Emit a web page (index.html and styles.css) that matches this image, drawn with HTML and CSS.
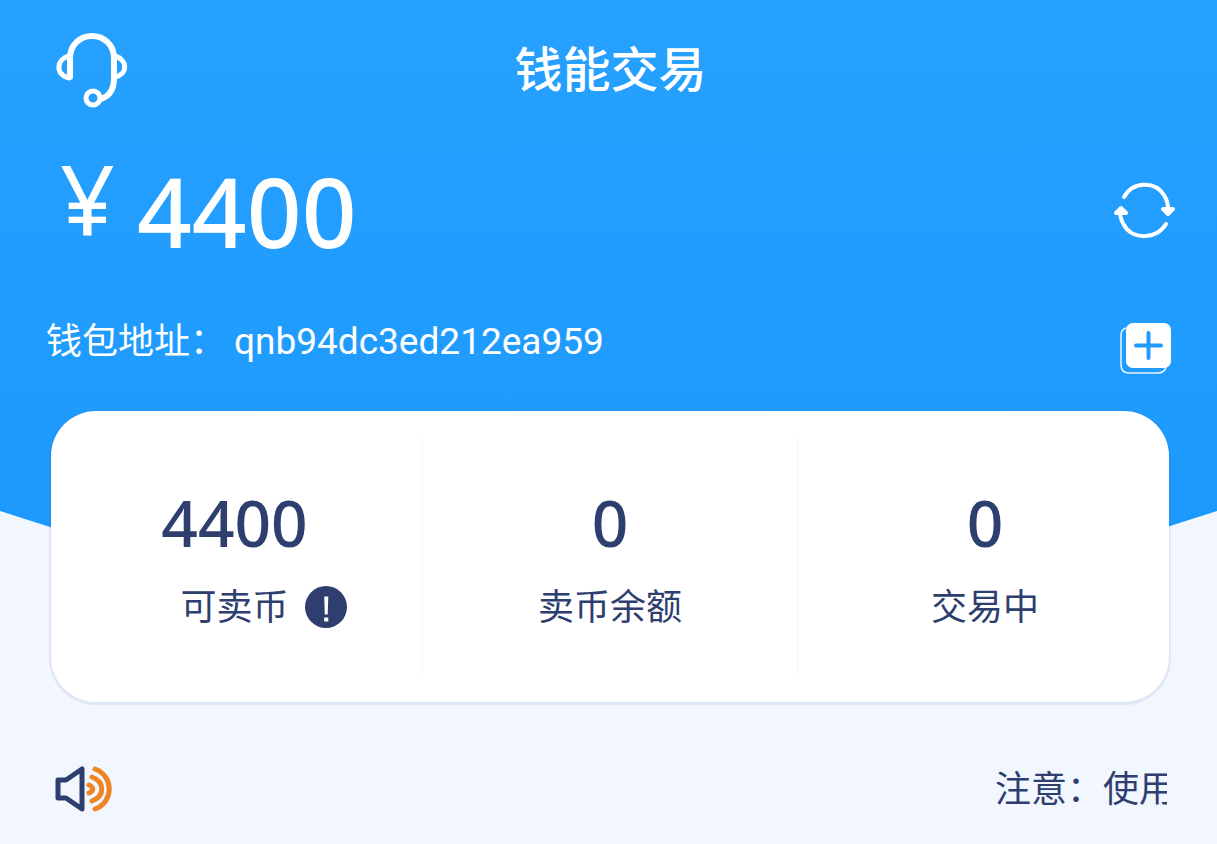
FILE: index.html
```html
<!DOCTYPE html>
<html lang="zh-CN">
<head>
	<meta charset="utf-8">
	<title>钱能交易</title>
	<meta name="viewport" content="width=device-width, initial-scale=1.0">
	<link rel="stylesheet" href="styles.css">
</head>
<body>
	<header class="hero">
		<div class="topbar">
			<button class="icon-btn" type="button" aria-label="客服">
				<svg width="72" height="78" viewBox="0 0 72 78" fill="none" stroke="#fff" stroke-width="6" stroke-linecap="round" stroke-linejoin="round">
					<path d="M14 46V27C14 14 24 5 36 5s22 9 22 22v20c0 11-4 18-13 21"/>
					<path d="M13 25C0 28-1 44 13 47M59 25c13 4 13 18 0 21" stroke-width="5"/>
					<circle cx="37" cy="67" r="7" stroke-width="5"/>
				</svg>
			</button>
			<h1>钱能交易</h1>
		</div>
		<div class="balance">
			<p class="amount"><span class="yen">¥</span>4400</p>
			<button class="icon-btn" type="button" aria-label="刷新">
				<svg width="62" height="58" viewBox="0 0 62 58" fill="none" stroke="#fff" stroke-width="4" stroke-linecap="round">
					<path d="M11 15C20-1 42-1 51 13c3 5 4 8 4 13"/>
					<path d="M53 42C43 58 19 58 11 43c-3-5-4-8-4-13"/>
					<path d="M50 27h10l-5 5zM3 31h10l-5-5z" fill="#fff" stroke-width="4" stroke-linejoin="round"/>
				</svg>
			</button>
		</div>
		<div class="wallet">
			<p><span>钱包地址：</span><span class="address">qnb94dc3ed212ea959</span></p>
			<button class="icon-btn" type="button" aria-label="复制钱包地址">
				<svg width="54" height="54" viewBox="0 0 54 54" fill="none">
					<path d="M7 7C4 8 2 11 2 14v30c0 5 3 8 8 8h29c4 0 7-2 8-6" stroke="#e6f5ff" stroke-width="1.500"/>
					<rect x="7" y="2" width="45" height="45" rx="7" fill="#fff"/>
					<path d="M29.500 12v25M17 24.500h25" stroke="#219bfd" stroke-width="4" stroke-linecap="round"/>
				</svg>
			</button>
		</div>
	</header>
	<main>
		<section class="card">
			<div class="stats">
				<div class="stat">
					<strong>4400</strong>
					<div class="label">
						<span>可卖币</span>
						<button class="hint" type="button" aria-label="说明">
							<svg width="42" height="42" viewBox="0 0 42 42">
								<circle cx="21" cy="21" r="21" fill="#2d3e6f"/>
								<path d="M19.200 10.500h4.100l-.6 18h-2.900zM19.200 31.500h4.100v4h-4.100z" fill="#fff"/>
							</svg>
						</button>
					</div>
				</div>
				<div class="stat">
					<strong>0</strong>
					<div class="label"><span>卖币余额</span></div>
				</div>
				<div class="stat">
					<strong>0</strong>
					<div class="label"><span>交易中</span></div>
				</div>
			</div>
		</section>
		<div class="notice">
			<svg width="60" height="48" viewBox="0 0 60 48" fill="none" stroke-linecap="round" stroke-linejoin="round">
				<path d="M3 15h8L27 4v40L11 33H3z" stroke="#2d3e6f" stroke-width="5"/>
				<g stroke="#ee8422" stroke-width="5">
					<path d="M40 4c19 7 19 33 0 40"/>
					<path d="M37 12c13 5 13 19 0 24"/>
					<path d="M34 20c5 2 5 6 0 8"/>
				</g>
			</svg>
			<p>注意：使用</p>
		</div>
	</main>
</body>
</html>
```
FILE: styles.css
```css
* { box-sizing: border-box; }
body {
	margin: 0;
	font-family: "Noto Sans", "Noto Sans CJK SC", sans-serif;
	font-size: 36px;
	line-height: 48px;
	color: #2d3e6f;
	background-color: #f2f6fe;
}
h1, p { margin: 0; }
button {
	padding: 0;
	border: 0;
	background: none;
	cursor: pointer;
}
svg { display: block; }
.hero {
	padding: 31px 42px 168px 46px;
	color: white;
	background: linear-gradient(#27a1ff, #1c99fd);
	clip-path: polygon(0 0, 100% 0, 100% calc(100% - 32px), calc(100% - 100px) 100%, 100px 100%, 0 calc(100% - 32px));
}
.topbar {
	display: grid;
	grid-template-columns: 1fr auto 1fr;
	align-items: center;
	height: 78px;
	padding: 0 4px 0 10px;
}
.topbar h1 {
	padding: 0 6px 2px 0;
	font-size: 48px;
	font-weight: 500;
}
.topbar .icon-btn { justify-self: start; }
.balance, .wallet {
	display: flex;
	justify-content: space-between;
	align-items: center;
}
.balance {
	height: 112px;
	margin-top: 46px;
	padding-left: 14px;
}
.amount {
	display: flex;
	gap: 22px;
	font-size: 96px;
	font-weight: 500;
	line-height: 112px;
}
.yen {
	margin-top: -12px;
	font-weight: 400;
}
.wallet {
	margin-top: 54px;
	height: 54px;
	padding-right: 2px;
}
.wallet p { padding-bottom: 14px; }
.address {
	margin-left: 8px;
	font-family: Roboto, sans-serif;
	font-size: 37px;
}
.card {
	margin: -132px 48px 0 51px;
	padding: 26px 0;
	background-color: white;
	border-radius: 45px;
	box-shadow: 0 1px 0 2px rgba(60, 90, 170, 0.1);
	position: relative;
}
.stats {
	display: grid;
	grid-template-columns: repeat(3, 1fr);
	margin: 0 -3px 0 -4px;
}
.stat {
	padding: 46px 0 45px;
	text-align: center;
}
.stat + .stat { border-left: 1px solid #f5f5f9; }
.stat strong {
	display: block;
	font-size: 64px;
	font-weight: 500;
	line-height: 80px;
}
.label {
	display: grid;
	grid-template-columns: 1fr auto 1fr;
	align-items: center;
	height: 48px;
	margin-top: 20px;
}
.label span { grid-column: 2; }
.hint { margin-left: 16px; justify-self: start; }
.notice {
	display: flex;
	justify-content: space-between;
	align-items: center;
	padding: 63px 50px 30px 55px;
}
.notice p {
	width: 172px;
	overflow: hidden;
	white-space: nowrap;
}
```
